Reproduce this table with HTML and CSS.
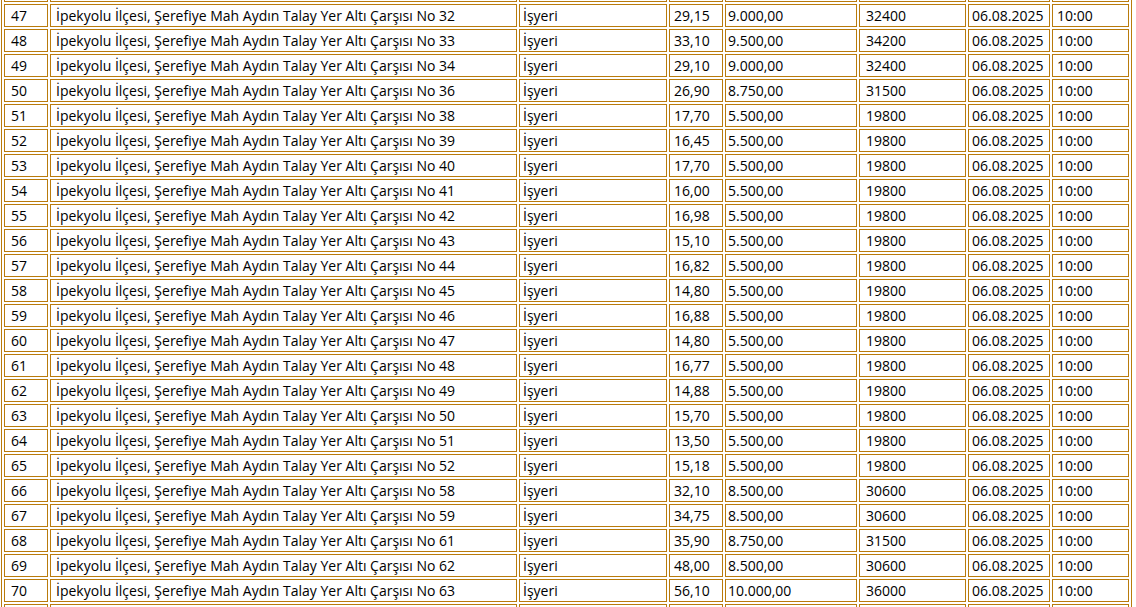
FILE: index.html
```html
<!DOCTYPE html>
<html lang="tr">
<head>
<meta charset="utf-8">
<title>İlan Listesi</title>
<link rel="stylesheet" href="styles.css">
</head>
<body>
<div class="viewport">
<table class="list">
<colgroup>
<col class="w-no"><col class="w-adres"><col class="w-cins"><col class="w-m2"><col class="w-bedel"><col class="w-tem"><col class="w-tarih"><col class="w-saat">
</colgroup>
<tbody>
<tr class="edge"><td></td><td></td><td></td><td></td><td></td><td></td><td></td><td></td></tr>
<tr><td class="c-no">47</td><td class="c-adres">İpekyolu İlçesi, Şerefiye Mah Aydın Talay Yer Altı Çarşısı No 32</td><td class="c-cins">İşyeri</td><td class="c-m2">29,15</td><td class="c-bedel">9.000,00</td><td class="c-tem">32400</td><td class="c-tarih">06.08.2025</td><td class="c-saat">10:00</td></tr>
<tr><td class="c-no">48</td><td class="c-adres">İpekyolu İlçesi, Şerefiye Mah Aydın Talay Yer Altı Çarşısı No 33</td><td class="c-cins">İşyeri</td><td class="c-m2">33,10</td><td class="c-bedel">9.500,00</td><td class="c-tem">34200</td><td class="c-tarih">06.08.2025</td><td class="c-saat">10:00</td></tr>
<tr><td class="c-no">49</td><td class="c-adres">İpekyolu İlçesi, Şerefiye Mah Aydın Talay Yer Altı Çarşısı No 34</td><td class="c-cins">İşyeri</td><td class="c-m2">29,10</td><td class="c-bedel">9.000,00</td><td class="c-tem">32400</td><td class="c-tarih">06.08.2025</td><td class="c-saat">10:00</td></tr>
<tr><td class="c-no">50</td><td class="c-adres">İpekyolu İlçesi, Şerefiye Mah Aydın Talay Yer Altı Çarşısı No 36</td><td class="c-cins">İşyeri</td><td class="c-m2">26,90</td><td class="c-bedel">8.750,00</td><td class="c-tem">31500</td><td class="c-tarih">06.08.2025</td><td class="c-saat">10:00</td></tr>
<tr><td class="c-no">51</td><td class="c-adres">İpekyolu İlçesi, Şerefiye Mah Aydın Talay Yer Altı Çarşısı No 38</td><td class="c-cins">İşyeri</td><td class="c-m2">17,70</td><td class="c-bedel">5.500,00</td><td class="c-tem">19800</td><td class="c-tarih">06.08.2025</td><td class="c-saat">10:00</td></tr>
<tr><td class="c-no">52</td><td class="c-adres">İpekyolu İlçesi, Şerefiye Mah Aydın Talay Yer Altı Çarşısı No 39</td><td class="c-cins">İşyeri</td><td class="c-m2">16,45</td><td class="c-bedel">5.500,00</td><td class="c-tem">19800</td><td class="c-tarih">06.08.2025</td><td class="c-saat">10:00</td></tr>
<tr><td class="c-no">53</td><td class="c-adres">İpekyolu İlçesi, Şerefiye Mah Aydın Talay Yer Altı Çarşısı No 40</td><td class="c-cins">İşyeri</td><td class="c-m2">17,70</td><td class="c-bedel">5.500,00</td><td class="c-tem">19800</td><td class="c-tarih">06.08.2025</td><td class="c-saat">10:00</td></tr>
<tr><td class="c-no">54</td><td class="c-adres">İpekyolu İlçesi, Şerefiye Mah Aydın Talay Yer Altı Çarşısı No 41</td><td class="c-cins">İşyeri</td><td class="c-m2">16,00</td><td class="c-bedel">5.500,00</td><td class="c-tem">19800</td><td class="c-tarih">06.08.2025</td><td class="c-saat">10:00</td></tr>
<tr><td class="c-no">55</td><td class="c-adres">İpekyolu İlçesi, Şerefiye Mah Aydın Talay Yer Altı Çarşısı No 42</td><td class="c-cins">İşyeri</td><td class="c-m2">16,98</td><td class="c-bedel">5.500,00</td><td class="c-tem">19800</td><td class="c-tarih">06.08.2025</td><td class="c-saat">10:00</td></tr>
<tr><td class="c-no">56</td><td class="c-adres">İpekyolu İlçesi, Şerefiye Mah Aydın Talay Yer Altı Çarşısı No 43</td><td class="c-cins">İşyeri</td><td class="c-m2">15,10</td><td class="c-bedel">5.500,00</td><td class="c-tem">19800</td><td class="c-tarih">06.08.2025</td><td class="c-saat">10:00</td></tr>
<tr><td class="c-no">57</td><td class="c-adres">İpekyolu İlçesi, Şerefiye Mah Aydın Talay Yer Altı Çarşısı No 44</td><td class="c-cins">İşyeri</td><td class="c-m2">16,82</td><td class="c-bedel">5.500,00</td><td class="c-tem">19800</td><td class="c-tarih">06.08.2025</td><td class="c-saat">10:00</td></tr>
<tr><td class="c-no">58</td><td class="c-adres">İpekyolu İlçesi, Şerefiye Mah Aydın Talay Yer Altı Çarşısı No 45</td><td class="c-cins">İşyeri</td><td class="c-m2">14,80</td><td class="c-bedel">5.500,00</td><td class="c-tem">19800</td><td class="c-tarih">06.08.2025</td><td class="c-saat">10:00</td></tr>
<tr><td class="c-no">59</td><td class="c-adres">İpekyolu İlçesi, Şerefiye Mah Aydın Talay Yer Altı Çarşısı No 46</td><td class="c-cins">İşyeri</td><td class="c-m2">16,88</td><td class="c-bedel">5.500,00</td><td class="c-tem">19800</td><td class="c-tarih">06.08.2025</td><td class="c-saat">10:00</td></tr>
<tr><td class="c-no">60</td><td class="c-adres">İpekyolu İlçesi, Şerefiye Mah Aydın Talay Yer Altı Çarşısı No 47</td><td class="c-cins">İşyeri</td><td class="c-m2">14,80</td><td class="c-bedel">5.500,00</td><td class="c-tem">19800</td><td class="c-tarih">06.08.2025</td><td class="c-saat">10:00</td></tr>
<tr><td class="c-no">61</td><td class="c-adres">İpekyolu İlçesi, Şerefiye Mah Aydın Talay Yer Altı Çarşısı No 48</td><td class="c-cins">İşyeri</td><td class="c-m2">16,77</td><td class="c-bedel">5.500,00</td><td class="c-tem">19800</td><td class="c-tarih">06.08.2025</td><td class="c-saat">10:00</td></tr>
<tr><td class="c-no">62</td><td class="c-adres">İpekyolu İlçesi, Şerefiye Mah Aydın Talay Yer Altı Çarşısı No 49</td><td class="c-cins">İşyeri</td><td class="c-m2">14,88</td><td class="c-bedel">5.500,00</td><td class="c-tem">19800</td><td class="c-tarih">06.08.2025</td><td class="c-saat">10:00</td></tr>
<tr><td class="c-no">63</td><td class="c-adres">İpekyolu İlçesi, Şerefiye Mah Aydın Talay Yer Altı Çarşısı No 50</td><td class="c-cins">İşyeri</td><td class="c-m2">15,70</td><td class="c-bedel">5.500,00</td><td class="c-tem">19800</td><td class="c-tarih">06.08.2025</td><td class="c-saat">10:00</td></tr>
<tr><td class="c-no">64</td><td class="c-adres">İpekyolu İlçesi, Şerefiye Mah Aydın Talay Yer Altı Çarşısı No 51</td><td class="c-cins">İşyeri</td><td class="c-m2">13,50</td><td class="c-bedel">5.500,00</td><td class="c-tem">19800</td><td class="c-tarih">06.08.2025</td><td class="c-saat">10:00</td></tr>
<tr><td class="c-no">65</td><td class="c-adres">İpekyolu İlçesi, Şerefiye Mah Aydın Talay Yer Altı Çarşısı No 52</td><td class="c-cins">İşyeri</td><td class="c-m2">15,18</td><td class="c-bedel">5.500,00</td><td class="c-tem">19800</td><td class="c-tarih">06.08.2025</td><td class="c-saat">10:00</td></tr>
<tr><td class="c-no">66</td><td class="c-adres">İpekyolu İlçesi, Şerefiye Mah Aydın Talay Yer Altı Çarşısı No 58</td><td class="c-cins">İşyeri</td><td class="c-m2">32,10</td><td class="c-bedel">8.500,00</td><td class="c-tem">30600</td><td class="c-tarih">06.08.2025</td><td class="c-saat">10:00</td></tr>
<tr><td class="c-no">67</td><td class="c-adres">İpekyolu İlçesi, Şerefiye Mah Aydın Talay Yer Altı Çarşısı No 59</td><td class="c-cins">İşyeri</td><td class="c-m2">34,75</td><td class="c-bedel">8.500,00</td><td class="c-tem">30600</td><td class="c-tarih">06.08.2025</td><td class="c-saat">10:00</td></tr>
<tr><td class="c-no">68</td><td class="c-adres">İpekyolu İlçesi, Şerefiye Mah Aydın Talay Yer Altı Çarşısı No 61</td><td class="c-cins">İşyeri</td><td class="c-m2">35,90</td><td class="c-bedel">8.750,00</td><td class="c-tem">31500</td><td class="c-tarih">06.08.2025</td><td class="c-saat">10:00</td></tr>
<tr><td class="c-no">69</td><td class="c-adres">İpekyolu İlçesi, Şerefiye Mah Aydın Talay Yer Altı Çarşısı No 62</td><td class="c-cins">İşyeri</td><td class="c-m2">48,00</td><td class="c-bedel">8.500,00</td><td class="c-tem">30600</td><td class="c-tarih">06.08.2025</td><td class="c-saat">10:00</td></tr>
<tr><td class="c-no">70</td><td class="c-adres">İpekyolu İlçesi, Şerefiye Mah Aydın Talay Yer Altı Çarşısı No 63</td><td class="c-cins">İşyeri</td><td class="c-m2">56,10</td><td class="c-bedel">10.000,00</td><td class="c-tem">36000</td><td class="c-tarih">06.08.2025</td><td class="c-saat">10:00</td></tr>
<tr class="edge"><td></td><td></td><td></td><td></td><td></td><td></td><td></td><td></td></tr>
</tbody>
</table>
</div>
</body>
</html>
```
FILE: styles.css
```css
html, body {
  margin: 0;
  padding: 0;
  background: #ffffff;
}
.viewport {
  height: 607px;
  overflow: hidden;
  padding-left: 1px;
}
.list {
  margin-top: -24px;
  width: 1131px;
  table-layout: fixed;
  border-collapse: separate;
  border-spacing: 2px;
  border: 1px solid #b97b0c;
  font-family: "Open Sans", "DejaVu Sans", sans-serif;
  font-size: 14px;
  color: #000000;
}
.list td {
  box-sizing: border-box;
  height: 23px;
  border: 1px solid #b97b0c;
  padding: 1px 3px 0 3px;
  line-height: 20px;
  white-space: nowrap;
  overflow: hidden;
  vertical-align: middle;
}
.w-no { width: 44px; }
.w-adres { width: 467px; }
.w-cins { width: 148px; }
.w-m2 { width: 54px; }
.w-bedel { width: 132px; }
.w-tem { width: 107px; }
.w-tarih { width: 82px; }
.w-saat { width: 77px; }
.list td.c-no { padding-left: 6px; }
.list td.c-adres { padding-left: 5px; }
.list td.c-cins { padding-left: 3px; }
.list td.c-m2 { padding-left: 4px; }
.list td.c-bedel { padding-left: 2px; }
.list td.c-tem { padding-left: 6px; }
.list td.c-tarih { padding-left: 3px; }
.list td.c-saat { padding-left: 4px; }
```
